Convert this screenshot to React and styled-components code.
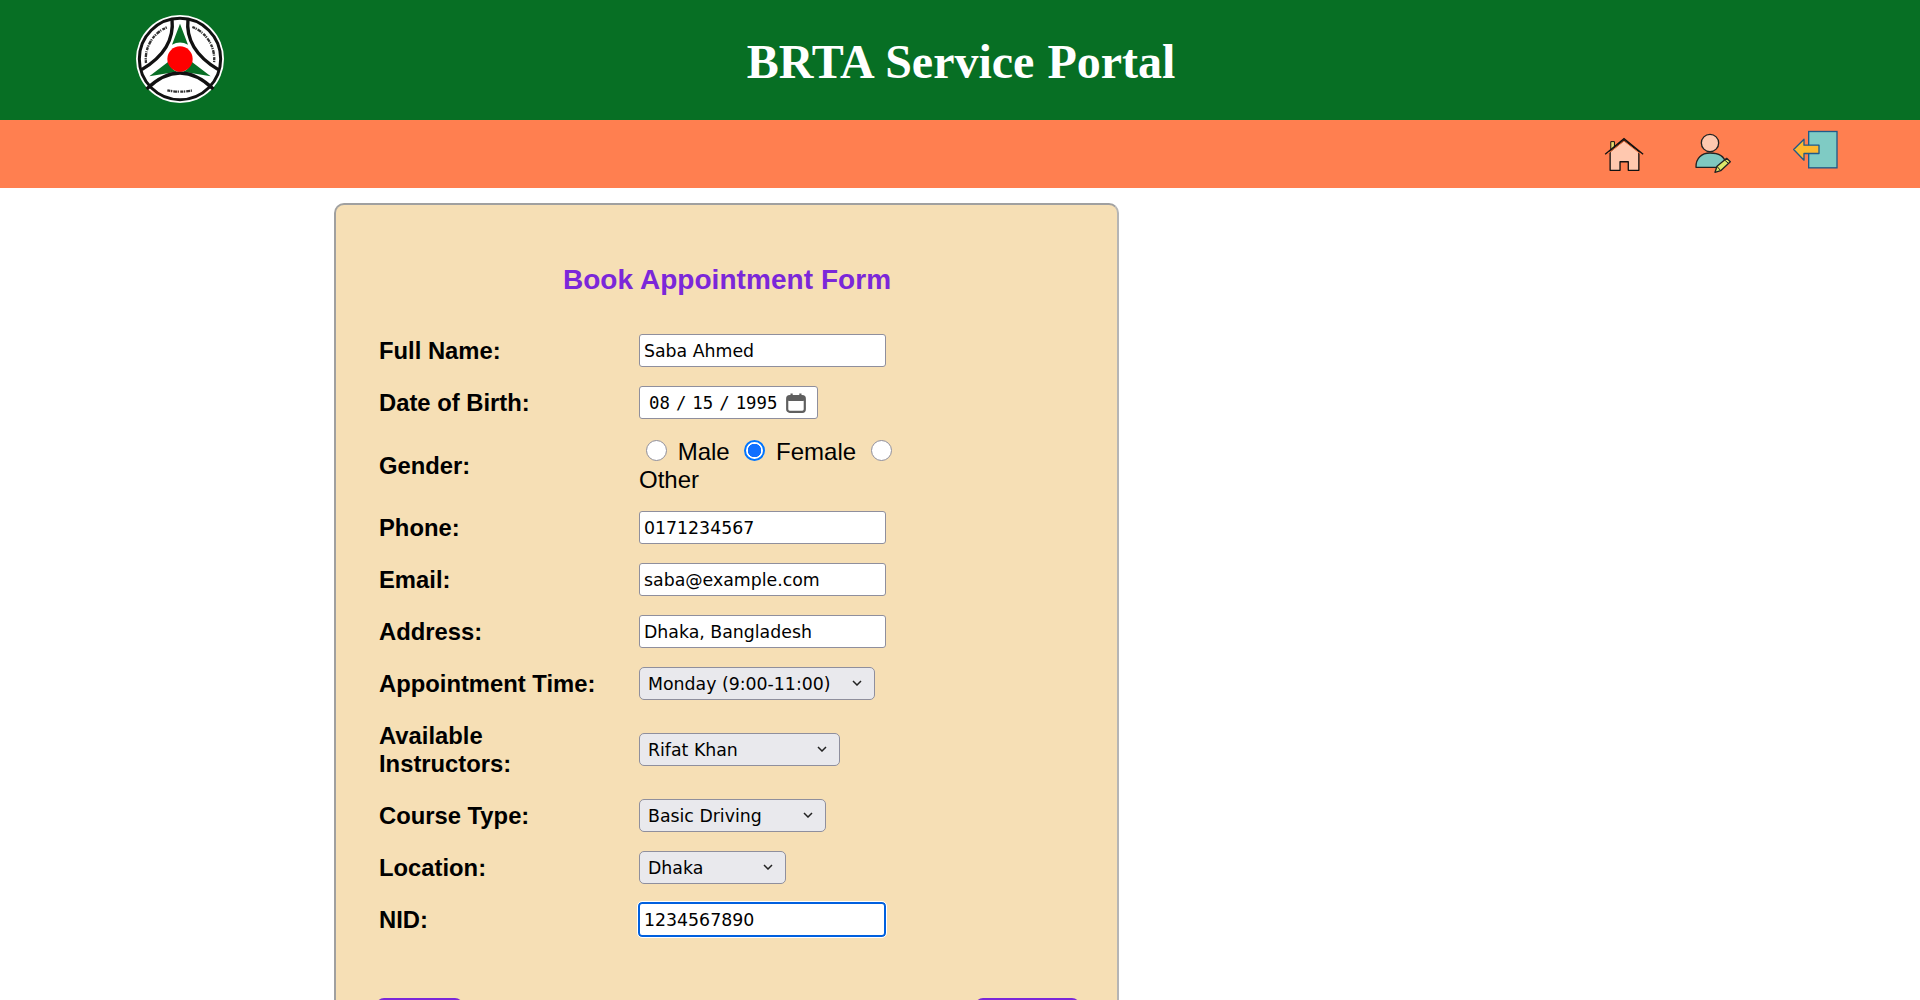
import React from "react";
import styled, { createGlobalStyle } from "styled-components";

const calendarSvg = encodeURIComponent(
  '<svg xmlns="http://www.w3.org/2000/svg" viewBox="0 0 20 20"><rect x="1.2" y="3.2" width="17.6" height="15.6" rx="2.5" fill="none" stroke="#5f5f5f" stroke-width="2.2"/><rect x="1" y="3" width="18" height="5" rx="2" fill="#5f5f5f"/><rect x="4.5" y="0.5" width="2.2" height="4" fill="#5f5f5f"/><rect x="13.3" y="0.5" width="2.2" height="4" fill="#5f5f5f"/></svg>'
);

const chevronSvg = encodeURIComponent(
  '<svg xmlns="http://www.w3.org/2000/svg" viewBox="0 0 10 6"><path d="M1 1 L5 5 L9 1" fill="none" stroke="#222" stroke-width="1.5"/></svg>'
);

const GlobalStyle = createGlobalStyle`
  html, body { margin: 0; padding: 0; background: #fff; }
  body { font-family: "Liberation Sans", Arial, sans-serif; }
`;

const Page = styled.div`
  height: 100vh;
  overflow: hidden;
`;

const Header = styled.header`
  position: relative;
  height: 120px;
  background: #076f24;
  display: flex;
  align-items: center;
  justify-content: center;
`;

const Logo = styled.svg`
  position: absolute;
  left: 136px;
  top: 15px;
  width: 88px;
  height: 88px;
`;

const Title = styled.h1`
  margin: 0 0 -2px 2px;
  font-family: "Liberation Serif", "Times New Roman", serif;
  font-size: 48px;
  font-weight: 700;
  word-spacing: 1px;
  color: #fff;
`;

const NavBar = styled.nav`
  height: 68px;
  background: #ff7f50;
  display: flex;
  align-items: flex-start;
  padding-left: 1601px;
`;

const NavIcon = styled.svg`
  display: block;
  margin-left: ${(p) => p.$gap}px;
  width: ${(p) => p.$w}px;
  height: ${(p) => p.$h}px;
  margin-top: ${(p) => p.$top}px;
`;

const Card = styled.section`
  box-sizing: border-box;
  width: 785px;
  margin: 15px 0 0 334px;
  padding: 42px 44px 40px 43px;
  background: #f6dfb5;
  border: 2px solid #a0a0a0;
  border-right-color: #b5b5b5;
  border-radius: 10px;
`;

const CardTitle = styled.h2`
  margin: 0 0 12px;
  padding-left: 2px;
  height: 66px;
  line-height: 66px;
  text-align: center;
  font-size: 28px;
  font-weight: 700;
  letter-spacing: 0.05px;
  color: #7b27d9;
`;

const Row = styled.div`
  display: grid;
  grid-template-columns: 260px 1fr;
  align-items: center;
  min-height: ${(p) => p.$h || 52}px;
`;

const Label = styled.label`
  width: 235px;
  font-size: 23.8px;
  line-height: 28px;
  font-weight: 700;
  color: #000;
`;

const TextInput = styled.input`
  box-sizing: border-box;
  width: 247px;
  height: 33px;
  margin-bottom: 2px;
  padding: 2px 4px 0;
  font-family: "DejaVu Sans", sans-serif;
  font-size: 17.33px;
  color: #000;
  background: #fff;
  border: 1px solid #8f8f9d;
  border-radius: 3px;
`;

const FocusedInput = styled(TextInput)`
  width: 248px;
  height: 35px;
  margin-left: -1px;
  border: 2px solid #0060df;
  outline: 1px solid #fff;
  border-radius: 4px;
`;

const DateInput = styled.input`
  box-sizing: border-box;
  width: 179px;
  height: 33px;
  margin-bottom: 2px;
  padding: 1px 11px 0 8px;
  font-family: "DejaVu Sans Mono", monospace;
  font-size: 17.33px;
  color: #000;
  background: #fff;
  border: 1px solid #8f8f9d;
  border-radius: 3px;

  &::-webkit-datetime-edit-text {
    padding: 0 5px;
  }

  &::-webkit-calendar-picker-indicator {
    width: 20px;
    height: 20px;
    padding: 0;
    margin: 0;
    background: url("data:image/svg+xml,${calendarSvg}") center / 20px 20px no-repeat;
  }
`;

const Select = styled.select`
  box-sizing: border-box;
  appearance: none;
  width: ${(p) => p.$w}px;
  height: 33px;
  margin-bottom: 2px;
  padding: 2px 4px 0 8px;
  font-family: "DejaVu Sans", sans-serif;
  font-size: 17.33px;
  color: #000;
  background: #e9e9ed url("data:image/svg+xml,${chevronSvg}") right 12px center / 10px 6px no-repeat;
  border: 1px solid #8f8f9d;
  border-radius: 5px;
`;

const GenderCell = styled.div`
  width: 262px;
  font-size: 24px;
  line-height: 28px;
  text-indent: -1px;
  color: #000;
`;

const Radio = styled.input.attrs({ type: "radio" })`
  appearance: none;
  box-sizing: border-box;
  width: 21px;
  height: 21px;
  margin: 0 4px 0 8px;
  vertical-align: -1px;
  background: #fff;
  border: 1px solid #8f8f9d;
  border-radius: 50%;

  &:checked {
    border: 2px solid #0075ff;
    background: radial-gradient(circle, #0f6fff 0 6.5px, #fff 7px);
  }
`;

const Actions = styled.div`
  display: flex;
  justify-content: space-between;
  margin: 52px -7px 0 -3px;
`;

const Button = styled.button`
  width: ${(p) => p.$w}px;
  height: 46px;
  border: 0;
  border-radius: 8px;
  background: #7b27d9;
  color: #fff;
  font-size: 20px;
  font-family: inherit;
`;

function BrtaLogo() {
  return (
    <Logo viewBox="108 46 264 264">
      <circle cx="240" cy="178" r="132" fill="#fff" />
      <circle cx="240" cy="178" r="122" fill="none" stroke="#111" strokeWidth="9" />
      <path d="M240 72 L264 135 Q240 122 216 135 Z" fill="#086e25" />
      <path d="M148 230 L205 186 Q212 208 230 216 Z" fill="#086e25" />
      <path d="M332 230 L275 186 Q268 208 250 216 Z" fill="#086e25" />
      <g fill="none" stroke="#111" strokeWidth="10">
        <path d="M216 58 Q226 150 125 210" />
        <path d="M264 58 Q254 150 355 210" />
        <path d="M140 268 Q240 172 340 268" />
      </g>
      <circle cx="240" cy="178" r="38" fill="#f00" />
      <g fill="none" stroke="#333" strokeWidth="7" strokeDasharray="9 2 4 3 12 2 3 4">
        <path d="M138 190 A103 103 0 0 1 203 82" />
        <path d="M277 82 A103 103 0 0 1 342 190" />
        <path d="M202 272 Q240 280 278 272" />
      </g>
    </Logo>
  );
}

function HomeIcon() {
  return (
    <NavIcon viewBox="72 80 120 106" $w={40} $h={35} $top={17} $gap={3}>
      <path d="M92 118 V94 H103 V118 Z" fill="#e6dc6e" stroke="#111" strokeWidth="3" />
      <path d="M90 124 L132 90 L177 124 V181 H145 V155 H120 V181 H90 Z" fill="#ffc8af" stroke="#111" strokeWidth="4" strokeLinejoin="round" />
      <path d="M75 132 L132 85 L190 132" fill="none" stroke="#111" strokeWidth="4" />
      <path d="M84 130 L132 92 L180 130" fill="none" stroke="#f0703a" strokeWidth="3" />
    </NavIcon>
  );
}

function UserIcon() {
  return (
    <NavIcon viewBox="346 70 112 120" $w={38} $h={40} $top={13} $gap={50}>
      <circle cx="393" cy="100" r="26" fill="#ffc8af" stroke="#222" strokeWidth="4" />
      <path d="M351 173 C350 145 368 130 393 130 C420 130 436 140 440 160 L425 173 Z" fill="#7fc8c0" stroke="#222" strokeWidth="4" strokeLinejoin="round" />
      <path d="M408 188 L414 170 L443 146 L454 156 L425 183 Z" fill="#dce86a" stroke="#222" strokeWidth="4" strokeLinejoin="round" />
      <path d="M414 170 L425 183 M437 151 L448 161" fill="none" stroke="#222" strokeWidth="3" />
    </NavIcon>
  );
}

function ExitIcon() {
  return (
    <NavIcon viewBox="636 62 138 116" $w={46} $h={39} $top={10} $gap={60}>
      <rect x="686" y="66" width="85" height="109" fill="#7fcbc4" stroke="#1f5a8a" strokeWidth="4" />
      <path d="M641 120 L672 89 V107 H717 V132 H672 V152 Z" fill="#fdb92f" stroke="#1f5a8a" strokeWidth="4" strokeLinejoin="round" />
    </NavIcon>
  );
}

export default function App() {
  return (
    <Page>
      <GlobalStyle />
      <Header>
        <BrtaLogo />
        <Title>BRTA Service Portal</Title>
      </Header>
      <NavBar>
        <HomeIcon />
        <UserIcon />
        <ExitIcon />
      </NavBar>
      <Card>
        <CardTitle>Book Appointment Form</CardTitle>
        <Row>
          <Label>Full Name:</Label>
          <TextInput defaultValue="Saba Ahmed" />
        </Row>
        <Row>
          <Label>Date of Birth:</Label>
          <DateInput type="date" defaultValue="1995-08-15" />
        </Row>
        <Row $h={73}>
          <Label>Gender:</Label>
          <GenderCell>
            <Radio name="gender" /> Male{" "}
            <Radio name="gender" defaultChecked /> Female{" "}
            <Radio name="gender" /> Other
          </GenderCell>
        </Row>
        <Row>
          <Label>Phone:</Label>
          <TextInput defaultValue="0171234567" />
        </Row>
        <Row>
          <Label>Email:</Label>
          <TextInput defaultValue="saba@example.com" />
        </Row>
        <Row>
          <Label>Address:</Label>
          <TextInput defaultValue="Dhaka, Bangladesh" />
        </Row>
        <Row>
          <Label>Appointment Time:</Label>
          <Select $w={236} defaultValue="Monday (9:00-11:00)">
            <option>Monday (9:00-11:00)</option>
          </Select>
        </Row>
        <Row $h={80}>
          <Label>Available Instructors:</Label>
          <Select $w={201} defaultValue="Rifat Khan">
            <option>Rifat Khan</option>
          </Select>
        </Row>
        <Row>
          <Label>Course Type:</Label>
          <Select $w={187} defaultValue="Basic Driving">
            <option>Basic Driving</option>
          </Select>
        </Row>
        <Row>
          <Label>Location:</Label>
          <Select $w={147} defaultValue="Dhaka">
            <option>Dhaka</option>
          </Select>
        </Row>
        <Row>
          <Label>NID:</Label>
          <FocusedInput defaultValue="1234567890" />
        </Row>
        <Actions>
          <Button $w={87}>Back</Button>
          <Button $w={105}>Submit</Button>
        </Actions>
      </Card>
    </Page>
  );
}
